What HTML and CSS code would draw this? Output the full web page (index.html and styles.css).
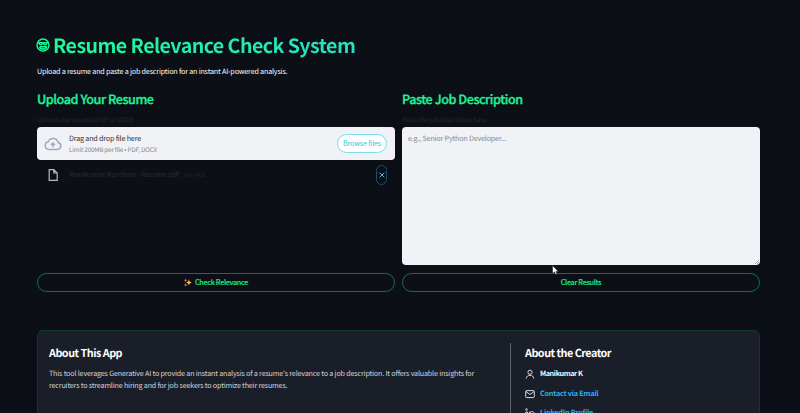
FILE: index.html
```
<!DOCTYPE html>
<html lang="en">
<head>
<meta charset="utf-8">
<title>Resume Relevance Check System</title>
<link rel="stylesheet" href="styles.css">
</head>
<body>
<main class="page">
  <header>
    <h1 class="title"><svg class="logo" viewBox="0 0 14 14"><circle cx="7" cy="7" r="6"/><path d="M2 4.8h10M3.2 5.2c.2 2.2 2.9 2.2 3.3 0M7.5 5.2c.4 2.2 3.1 2.2 3.3 0M3.6 8.8h6.8c-.5 3-6.3 3-6.8 0"/></svg><span class="title-text">Resume Relevance Check System</span></h1>
    <p class="intro"><span>Upload a resume and paste a job description for an instant AI-powered analysis.</span></p>
  </header>
  <div class="columns">
    <section>
      <h2 class="heading"><span>Upload Your Resume</span></h2>
      <div class="label">Upload your resume (PDF or DOCX)</div>
      <div class="dropzone">
        <svg class="cloud" viewBox="0 0 18 14"><path d="M4.7 12.5h8.8a3.5 3.5 0 0 0 .6-6.900A5.1 5.1 0 0 0 4.3 4.8a3.900 3.900 0 0 0 .4 7.700z"/><path d="M9 10V6.200M7 8l2-2 2 2"/></svg>
        <div class="drop-text">
          <div class="drop-title"><span>Drag and drop file here</span></div>
          <div class="drop-limit"><span>Limit 200MB per file • PDF, DOCX</span></div>
        </div>
        <button class="browse"><span>Browse files</span></button>
      </div>
      <div class="file">
        <svg class="file-icon" viewBox="0 0 10 12"><path d="M1.200.7h4.600L9.200 4v7.300H1.200zM5.800.7V4h3.400"/></svg>
        <span class="file-name">Manikumar Kundena - Resume.pdf</span>
        <span class="file-size">340.4KB</span>
        <button class="remove" aria-label="Remove file"><svg viewBox="0 0 6 6"><path d="M.6.6l4.800 4.800M5.400.6L.6 5.400"/></svg></button>
      </div>
    </section>
    <section>
      <h2 class="heading"><span>Paste Job Description</span></h2>
      <div class="label label-job">Paste the job description here</div>
      <div class="textarea"><span>e.g., Senior Python Developer...</span>
        <svg class="grip" viewBox="0 0 5 5"><path d="M0 5L5 0M2.500 5L5 2.500"/></svg>
      </div>
    </section>
  </div>
  <div class="actions">
    <button class="action"><svg class="sparkles" viewBox="0 0 9 9"><path class="gold" d="M5.500 1l.8 2.400L8.700 4.500l-2.400 1L5.500 8l-.8-2.500-2.400-1 2.400-1.100z"/><path class="rose" d="M1.800.3l.5 1.200 1.200.5-1.200.5-.5 1.200-.5-1.200L.1 2l1.200-.5zM1.900 5.600l.5 1.200 1.200.5-1.200.5-.5 1.100-.5-1.100-1.200-.5 1.200-.5z"/></svg><span>Check Relevance</span></button>
    <button class="action"><span>Clear Results</span></button>
  </div>
  <footer class="about">
    <section class="about-app">
      <h3><span>About This App</span></h3>
      <p><span>This tool leverages Generative AI to provide an instant analysis of a resume's relevance to a job description. It offers valuable insights for</span><br><span>recruiters to streamline hiring and for job seekers to optimize their resumes.</span></p>
    </section>
    <section class="creator">
      <h3><span>About the Creator</span></h3>
      <ul>
        <li class="name"><svg viewBox="0 0 10 10"><circle cx="5" cy="3.300" r="2.100"/><path d="M1.300 9.500c0-4.200 7.400-4.200 7.400 0"/></svg><span>Manikumar K</span></li>
        <li class="link"><svg viewBox="0 0 10 10"><rect x=".7" y="1.600" width="8.600" height="7" rx="1"/><path d="M.8 2.400L5 5.500l4.200-3.100"/></svg><span>Contact via Email</span></li>
        <li class="link"><svg viewBox="0 0 10 10"><circle cx="1.500" cy="1.500" r=".8"/><path d="M.8 4h1.800v5.500H.8zM4.500 9.500V4h1.600c2-1 3.200.2 3.200 1.800v3.700H7.500V6.500c0-1.200-1.300-1.200-1.300 0v3z"/></svg><span>LinkedIn Profile</span></li>
      </ul>
    </section>
  </footer>
</main>
<svg class="cursor" viewBox="0 0 7 10"><path d="M.5.500v8l2-1.600 1.200 2.600 1.400-.6-1.200-2.500h2.400z"/></svg>
</body>
</html>
```
FILE: styles.css
```
* { box-sizing: border-box; margin: 0; padding: 0; }
html, body { height: 413px; overflow: hidden; }
body {
  background: #0c0f16;
  color: #fafafa;
  font: 7.2px/12px "Noto Sans CJK JP", "Noto Sans", sans-serif;
  letter-spacing: -.19px;
  text-rendering: geometricPrecision;
}
svg { display: block; flex: none; fill: none; stroke: currentColor; }
button { font: inherit; letter-spacing: inherit; background: none; border: 0; }
.page { width: 724px; height: 413px; overflow: hidden; margin-left: 36px; padding: 31px 0 0 1px; }
.title { display: flex; align-items: center; height: 28px; font-size: 19.600px; line-height: 28px; font-weight: 700; letter-spacing: -.55px; }
.logo { width: 14px; height: 14px; margin-right: 3px; margin-left: -1px; color: #16f89c; stroke-width: 1.4; }
.title-text { background: linear-gradient(90deg, #1dfc9b, #27e0c1); -webkit-background-clip: text; background-clip: text; color: transparent; white-space: nowrap; }
.intro { margin-top: 7px; }
.columns { display: grid; grid-template-columns: 358px 358px; gap: 7px; margin-top: 11px; height: 177px; }
.heading { height: 20px; font-size: 12.600px; line-height: 20px; font-weight: 500; letter-spacing: -.44px; color: #1df59a; -webkit-text-stroke: .3px #1df59a; }
.label { height: 10px; margin: 6px 0 2px; font-size: 6.300px; line-height: 10px; letter-spacing: -.18px; color: #252933; }
.label-job { letter-spacing: -.1px; }
.dropzone { display: flex; align-items: center; height: 33px; padding: 0 8px 0 7px; border-radius: 4px; background: #f0f2f6; color: #31333f; }
.cloud { width: 18px; height: 14px; color: #a1a8b8; stroke-width: 1.500; }
.drop-text { flex: 1; margin-left: 7px; }
.drop-title { line-height: 11px; padding-top: 1px; }
.drop-limit { font-size: 6.300px; line-height: 10px; color: #85878f; }
.browse { width: 50px; height: 19px; border: 1px solid #7edcec; border-radius: 10px; background: #fff; color: #35c5dd; line-height: 17px; }
.file { display: flex; align-items: center; height: 30px; padding: 0 8px 0 11px; color: #282c36; }
.file-icon { width: 10px; height: 12px; color: #b5bac6; stroke-width: 1.200; }
.file-name { margin-left: 11px; }
.file-size { margin-left: 4px; font-size: 6px; letter-spacing: -.1px; color: #1f232b; }
.remove { display: flex; align-items: center; justify-content: center; width: 11px; height: 20px; margin-left: auto; border: 1px solid #1c536b; border-radius: 5.500px; color: #38bde8; }
.remove svg { width: 6px; height: 6px; }
.textarea { position: relative; height: 138px; padding: 6px 6px; border-radius: 4px; background: #f0f2f6; color: #898b93; }
.grip { position: absolute; right: 1px; bottom: 1px; width: 4px; height: 4px; color: #777; stroke-width: .7; }
.actions { display: grid; grid-template-columns: 358px 358px; gap: 7px; margin-top: 7px; }
.action { display: flex; align-items: center; justify-content: center; height: 19px; padding-bottom: 1px; border: 1px solid #137144; border-radius: 10px; color: #1be588; font-weight: 500; letter-spacing: -.3px; -webkit-text-stroke: .15px #1be588; }
.sparkles { width: 8px; height: 9px; margin-right: 3px; stroke: none; }
.gold { fill: #ffc45d; }
.rose { fill: #f69b76; }
.about { display: flex; height: 120px; margin-top: 38px; padding: 12px 11px; border: 1px solid #10382f; border-radius: 6px; background: #1a1e28; }
.about-app { width: 462px; border-right: 1px solid #5c5f67; }
.about h3 { height: 20px; font-size: 10.800px; line-height: 20px; font-weight: 600; letter-spacing: -.5px; color: #fff; }
.about p { margin-top: 4.500px; line-height: 12.500px; letter-spacing: -.185px; color: #d0d2d6; white-space: nowrap; }
.creator { padding-left: 14px; }
.creator ul { list-style: none; margin-top: 5px; }
.creator li { display: flex; align-items: center; height: 12px; margin-bottom: 7.500px; font-weight: 700; }
.creator li svg { width: 10px; height: 10px; margin-right: 5px; stroke-width: 1; color: #d7d9dd; }
.creator .name { letter-spacing: -.38px; }
.link { color: #2eb4ea; }
.cursor { position: absolute; left: 552px; top: 265px; width: 7px; height: 10px; fill: #fff; stroke: #111; stroke-width: .5; }
```
